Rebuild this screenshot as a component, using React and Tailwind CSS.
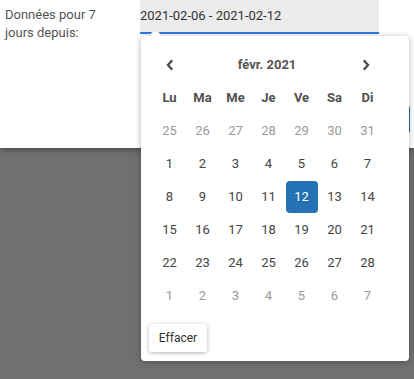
import React from "react";

const days = ["Lu", "Ma", "Me", "Je", "Ve", "Sa", "Di"];

// weeks of février 2021, muted = outside the month
const weeks = [
  [25, 26, 27, 28, 29, 30, 31].map((d) => ({ d, muted: true })),
  [1, 2, 3, 4, 5, 6, 7].map((d) => ({ d })),
  [8, 9, 10, 11, 12, 13, 14].map((d) => ({ d, selected: d === 12 })),
  [15, 16, 17, 18, 19, 20, 21].map((d) => ({ d })),
  [22, 23, 24, 25, 26, 27, 28].map((d) => ({ d })),
  [1, 2, 3, 4, 5, 6, 7].map((d) => ({ d, muted: true })),
];

const Chevron = ({ dir }) => (
  <svg width="8" height="12" viewBox="0 0 8 12" fill="none">
    <path
      d={dir === "left" ? "M6.2 1.2 L2 6 L6.2 10.8" : "M1.8 1.2 L6 6 L1.8 10.8"}
      stroke="#505050"
      strokeWidth="2.4"
    />
  </svg>
);

const App = () => {
  return (
    <div className="relative w-[414px] h-[379px] overflow-hidden bg-[#707070] font-['Roboto',sans-serif]">
      {/* top panel */}
      <div className="h-[148px] bg-white shadow-[0_2px_6px_rgba(0,0,0,0.35)] flex items-start">
        <div className="w-[140px] pl-[5px] pr-[24px] pt-[6px] text-[13px] leading-[18px] text-[#555]">
          Données pour 7 jours depuis:
        </div>
        <div className="w-[239px] h-[34px] bg-[#ebebeb] border-b-2 border-[#2a7ae2] flex items-center text-[13px] text-[#333]">
          2021-02-06 - 2021-02-12
        </div>
      </div>

      {/* button partly hidden behind the picker */}
      <div className="absolute left-[370px] top-[105px] w-[40px] h-[29px] border border-[#2471b3] rounded-[3px] bg-white"></div>

      {/* caret */}
      <div className="absolute left-[151px] top-[31px] w-[9px] h-[9px] rotate-45 bg-white border-t border-l border-[#e3e3e3] z-20"></div>

      {/* date picker */}
      <div className="absolute left-[141px] top-[36px] w-[268px] h-[325px] bg-white rounded-[4px] shadow-[0_1px_6px_rgba(0,0,0,0.3)] pl-3 pt-3 z-10">
        <div className="w-[231px] h-[33px] flex items-center justify-between pl-[13px] pr-[14px]">
          <Chevron dir="left" />
          <span className="text-[13px] font-bold text-[#555] pr-[2px]">févr. 2021</span>
          <Chevron dir="right" />
        </div>
        <div className="grid grid-cols-[repeat(7,33px)]">
          {days.map((d) => (
            <div key={d} className="h-[33px] flex items-center justify-center text-[13px] font-bold text-[#505050]">
              {d}
            </div>
          ))}
          {weeks.flat().map((c, i) => (
            <div key={i} className="h-[33px] flex items-center justify-center">
              <div
                className={
                  "w-[32px] h-[32px] flex items-center justify-center rounded-[4px] text-[13px] " +
                  (c.selected
                    ? "bg-[#2471b3] text-white"
                    : c.muted
                    ? "text-[#999]"
                    : "text-[#444]")
                }
              >
                {c.d}
              </div>
            </div>
          ))}
        </div>
        <button className="mt-[12px] -ml-[4px] w-[58px] h-[28px] bg-white rounded-[3px] shadow-[0_1px_4px_rgba(0,0,0,0.3)] text-[12px] text-[#333]">
          Effacer
        </button>
      </div>
    </div>
  );
};

export default App;
